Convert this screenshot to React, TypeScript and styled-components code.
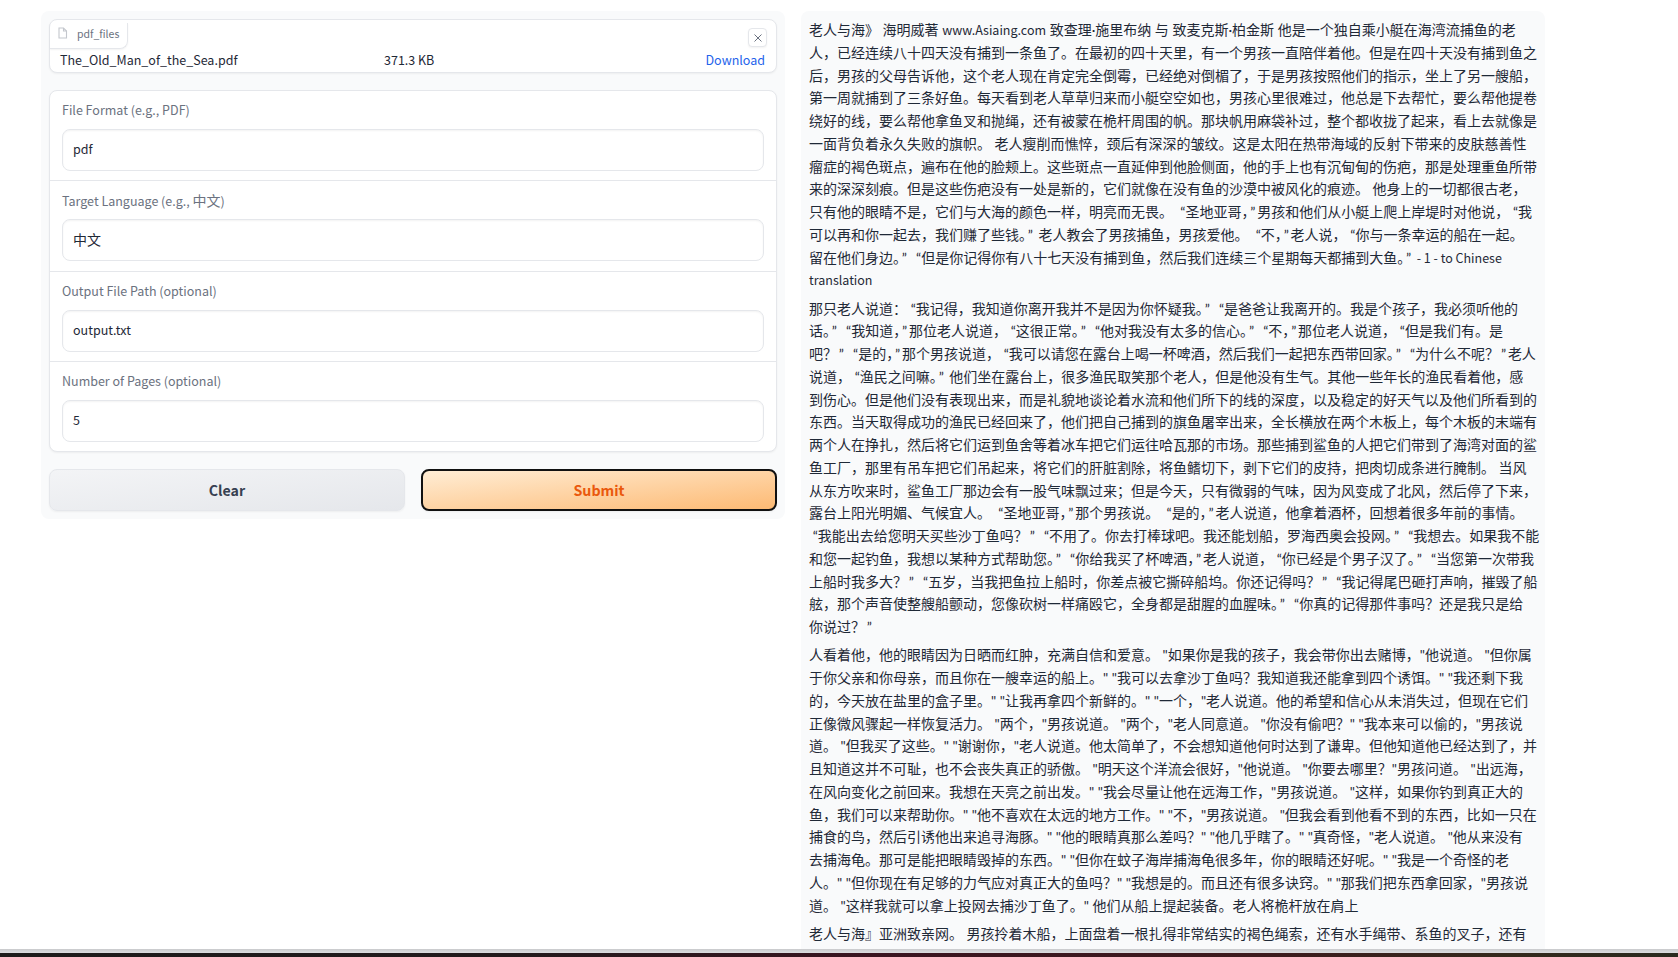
import * as React from 'react';
import styled, { createGlobalStyle } from 'styled-components';

// Noto CJK's latin is Source Sans drawn about 1.12x larger, so latin runs get a smaller size
const fontStack = `'Noto Sans CJK SC', 'Noto Sans', sans-serif`;

const GlobalStyle = createGlobalStyle`
  html, body {
    margin: 0;
    padding: 0;
    background: #fff;
    font-family: ${fontStack};
  }
  * {
    box-sizing: border-box;
  }
`;

const Page = styled.div`
  width: 1678px;
  height: 957px;
  display: flex;
  flex-direction: column;
  overflow: hidden;
`;

const Columns = styled.div`
  flex: 1;
  min-height: 0;
  display: flex;
  gap: 16px;
  padding: 11px 133px 0 41px;
`;

const LeftPanel = styled.div`
  width: 744px;
  height: 508px;
  padding: 8px;
  background: #f9fafb;
  border-radius: 8px;
  display: flex;
  flex-direction: column;
`;

const FileBox = styled.div`
  position: relative;
  height: 54px;
  background: #fff;
  border: 1px solid #e5e7eb;
  border-radius: 8px;
  box-shadow: 0 1px 2px rgba(0, 0, 0, 0.05);
`;

const FileTag = styled.div`
  display: inline-flex;
  align-items: center;
  gap: 9px;
  height: 26px;
  padding: 0 8px 4px 7px;
  font-size: 10.5px;
  color: #6b7280;
  border-right: 1px solid #e5e7eb;
  border-bottom: 1px solid #e5e7eb;
  border-bottom-right-radius: 8px;
  box-shadow: 0 1px 2px rgba(0, 0, 0, 0.05);
`;

const CloseButton = styled.div`
  position: absolute;
  top: 8px;
  right: 9px;
  width: 19px;
  height: 19px;
  display: flex;
  align-items: center;
  justify-content: center;
  background: #fff;
  border: 1px solid #e5e7eb;
  border-radius: 4px;
  box-shadow: 0 1px 2px rgba(0, 0, 0, 0.05);
`;

const FileRow = styled.div`
  display: grid;
  grid-template-columns: 324px 1fr auto;
  align-items: center;
  height: 21px;
  padding: 0 11px 0 10px;
  font-size: 12.5px;
  color: #1f2937;
`;

const DownloadLink = styled.a`
  color: #2563eb;
  text-decoration: none;
`;

const FormBox = styled.div`
  margin-top: 17px;
  height: 362px;
  background: #fff;
  border: 1px solid #e5e7eb;
  border-radius: 8px;
  box-shadow: 0 1px 2px rgba(0, 0, 0, 0.05);
  display: flex;
  flex-direction: column;
`;

const Field = styled.div`
  flex: 1;
  padding: 9px 12px 0;
  & + & {
    border-top: 1px solid #e5e7eb;
  }
`;

const FieldLabel = styled.div`
  height: 20px;
  line-height: 20px;
  font-size: 12.5px;
  color: #6b7280;
  margin-bottom: 9px;
`;

const FieldInput = styled.div`
  height: 42px;
  line-height: 38px;
  padding: 0 10px;
  font-size: 12.5px;
  color: #1f2937;
  background: #fff;
  border: 1px solid #e5e7eb;
  border-radius: 8px;
  box-shadow: inset 0 1px 2px rgba(0, 0, 0, 0.05);
`;

const Cjk = styled.span`
  font-size: 14px;
`;

const ButtonRow = styled.div`
  display: grid;
  grid-template-columns: 1fr 1fr;
  gap: 16px;
  margin-top: 17px;
`;

const ActionButton = styled.button<{ $primary?: boolean }>`
  height: 42px;
  padding: 0;
  font-family: ${fontStack};
  font-size: 14.2px;
  font-weight: 600;
  border-radius: 8px;
  color: ${(p) => (p.$primary ? '#ea580c' : '#374151')};
  background: ${(p) =>
    p.$primary
      ? 'linear-gradient(to bottom right, #ffedd5, #fdba74)'
      : 'linear-gradient(to bottom right, #f3f4f6, #e5e7eb)'};
  border: ${(p) => (p.$primary ? '2px solid #111' : '1px solid #e5e7eb')};
  box-shadow: 0 1px 2px rgba(0, 0, 0, 0.05);
`;

const OutputPanel = styled.div`
  width: 744px;
  height: 100%;
  padding: 8px 8px 0;
  background: #f9fafb;
  border-top-left-radius: 8px;
  border-top-right-radius: 8px;
  overflow: hidden;
`;

// Lato goes first for its narrow quotes, spaces and middle dot; the CJK comes from the fallback
const Paragraph = styled.p`
  margin: 0 0 5.5px;
  font-family: 'Lato', ${fontStack};
  font-size: 14px;
  line-height: 22.75px;
  color: #1f2937;
`;

const TextLine = styled.span`
  display: block;
  white-space: nowrap;
`;

const LatinRun = styled.span`
  font-family: ${fontStack};
  font-size: 12.5px;
`;

// curly quotes sit wider in the reference than Lato draws them
const Quote = styled.span<{ $open: boolean }>`
  padding: ${(p) => (p.$open ? '0 0 0 3.7px' : '0 1.85px')};
`;

const ShadowBar = styled.div`
  height: 4px;
  flex-shrink: 0;
  background: linear-gradient(to bottom, #c9cacc, #dcdde0);
`;

const TaskBar = styled.div`
  height: 4px;
  flex-shrink: 0;
  background: linear-gradient(to right, #1d1b1b 0%, #221a1c 30%, #3a1420 52%, #3d1a1d 75%, #33291c 90%, #2a2a1f 100%);
`;

const fields = [
  { label: <>File Format (e.g., PDF)</>, value: <>pdf</> },
  { label: <>Target Language (e.g., <Cjk>中文</Cjk>)</>, value: <Cjk>中文</Cjk> },
  { label: <>Output File Path (optional)</>, value: <>output.txt</> },
  { label: <>Number of Pages (optional)</>, value: <>5</> },
];

const paragraphs = [
  [
    '老人与海》 海明威著 www.Asiaing.com 致查理·施里布纳 与 致麦克斯·柏金斯 他是一个独自乘小艇在海湾流捕鱼的老',
    '人，已经连续八十四天没有捕到一条鱼了。在最初的四十天里，有一个男孩一直陪伴着他。但是在四十天没有捕到鱼之',
    '后，男孩的父母告诉他，这个老人现在肯定完全倒霉，已经绝对倒楣了，于是男孩按照他们的指示，坐上了另一艘船，',
    '第一周就捕到了三条好鱼。每天看到老人草草归来而小艇空空如也，男孩心里很难过，他总是下去帮忙，要么帮他提卷',
    '绕好的线，要么帮他拿鱼叉和抛绳，还有被蒙在桅杆周围的帆。那块帆用麻袋补过，整个都收拢了起来，看上去就像是',
    '一面背负着永久失败的旗帜。 老人瘦削而憔悴，颈后有深深的皱纹。这是太阳在热带海域的反射下带来的皮肤慈善性',
    '瘤症的褐色斑点，遍布在他的脸颊上。这些斑点一直延伸到他脸侧面，他的手上也有沉甸甸的伤疤，那是处理重鱼所带',
    '来的深深刻痕。但是这些伤疤没有一处是新的，它们就像在没有鱼的沙漠中被风化的痕迹。 他身上的一切都很古老，',
    '只有他的眼睛不是，它们与大海的颜色一样，明亮而无畏。 “圣地亚哥，”男孩和他们从小艇上爬上岸堤时对他说，“我',
    '可以再和你一起去，我们赚了些钱。” 老人教会了男孩捕鱼，男孩爱他。 “不，”老人说，“你与一条幸运的船在一起。',
    '留在他们身边。” “但是你记得你有八十七天没有捕到鱼，然后我们连续三个星期每天都捕到大鱼。” - 1 - to Chinese',
    'translation',
  ],
  [
    '那只老人说道：“我记得，我知道你离开我并不是因为你怀疑我。” “是爸爸让我离开的。我是个孩子，我必须听他的',
    '话。” “我知道，”那位老人说道，“这很正常。” “他对我没有太多的信心。” “不，”那位老人说道，“但是我们有。是',
    '吧？” “是的，”那个男孩说道，“我可以请您在露台上喝一杯啤酒，然后我们一起把东西带回家。” “为什么不呢？”老人',
    '说道，“渔民之间嘛。” 他们坐在露台上，很多渔民取笑那个老人，但是他没有生气。其他一些年长的渔民看着他，感',
    '到伤心。但是他们没有表现出来，而是礼貌地谈论着水流和他们所下的线的深度，以及稳定的好天气以及他们所看到的',
    '东西。当天取得成功的渔民已经回来了，他们把自己捕到的旗鱼屠宰出来，全长横放在两个木板上，每个木板的末端有',
    '两个人在挣扎，然后将它们运到鱼舍等着冰车把它们运往哈瓦那的市场。那些捕到鲨鱼的人把它们带到了海湾对面的鲨',
    '鱼工厂，那里有吊车把它们吊起来，将它们的肝脏割除，将鱼鳍切下，剥下它们的皮持，把肉切成条进行腌制。 当风',
    '从东方吹来时，鲨鱼工厂那边会有一股气味飘过来；但是今天，只有微弱的气味，因为风变成了北风，然后停了下来，',
    '露台上阳光明媚、气候宜人。 “圣地亚哥，”那个男孩说。 “是的，”老人说道，他拿着酒杯，回想着很多年前的事情。',
    '“我能出去给您明天买些沙丁鱼吗？” “不用了。你去打棒球吧。我还能划船，罗海西奥会投网。” “我想去。如果我不能',
    '和您一起钓鱼，我想以某种方式帮助您。” “你给我买了杯啤酒，”老人说道，“你已经是个男子汉了。” “当您第一次带我',
    '上船时我多大？” “五岁，当我把鱼拉上船时，你差点被它撕碎船坞。你还记得吗？” “我记得尾巴砸打声响，摧毁了船',
    '舷，那个声音使整艘船颤动，您像砍树一样痛殴它，全身都是甜腥的血腥味。” “你真的记得那件事吗？还是我只是给',
    '你说过？”',
  ],
  [
    '人看着他，他的眼睛因为日晒而红肿，充满自信和爱意。 "如果你是我的孩子，我会带你出去赌博，"他说道。 "但你属',
    '于你父亲和你母亲，而且你在一艘幸运的船上。" "我可以去拿沙丁鱼吗？我知道我还能拿到四个诱饵。" "我还剩下我',
    '的，今天放在盐里的盒子里。" "让我再拿四个新鲜的。" "一个，"老人说道。他的希望和信心从未消失过，但现在它们',
    '正像微风骤起一样恢复活力。 "两个，"男孩说道。 "两个，"老人同意道。 "你没有偷吧？" "我本来可以偷的，"男孩说',
    '道。 "但我买了这些。" "谢谢你，"老人说道。他太简单了，不会想知道他何时达到了谦卑。但他知道他已经达到了，并',
    '且知道这并不可耻，也不会丧失真正的骄傲。 "明天这个洋流会很好，"他说道。 "你要去哪里？"男孩问道。 "出远海，',
    '在风向变化之前回来。我想在天亮之前出发。" "我会尽量让他在远海工作，"男孩说道。 "这样，如果你钓到真正大的',
    '鱼，我们可以来帮助你。" "他不喜欢在太远的地方工作。" "不，"男孩说道。 "但我会看到他看不到的东西，比如一只在',
    '捕食的鸟，然后引诱他出来追寻海豚。" "他的眼睛真那么差吗？" "他几乎瞎了。" "真奇怪，"老人说道。 "他从来没有',
    '去捕海龟。那可是能把眼睛毁掉的东西。" "但你在蚊子海岸捕海龟很多年，你的眼睛还好呢。" "我是一个奇怪的老',
    '人。" "但你现在有足够的力气应对真正大的鱼吗？" "我想是的。而且还有很多诀窍。" "那我们把东西拿回家，"男孩说',
    '道。 "这样我就可以拿上投网去捕沙丁鱼了。" 他们从船上提起装备。老人将桅杆放在肩上',
  ],
  ['老人与海』亚洲致亲网。 男孩拎着木船，上面盘着一根扎得非常结实的褐色绳索，还有水手绳带、系鱼的叉子，还有'],
];

const runs = /(www\.Asiaing\.com|- 1 - to Chinese|^translation$|[“”])/;

const renderRun = (part: string, key: number) => {
  if (part === '“' || part === '”') {
    return (
      <Quote key={key} $open={part === '“'}>
        {part}
      </Quote>
    );
  }
  return runs.test(part) ? <LatinRun key={key}>{part}</LatinRun> : part;
};

const FileIcon = () => (
  <svg width="11" height="12" viewBox="0 0 11 12" fill="none" stroke="#c4c7cd" strokeWidth="1.1">
    <path d="M2 1h4.5L9.5 4v7H2z" />
    <path d="M6.5 1v3h3" />
  </svg>
);

const CloseIcon = () => (
  <svg width="10" height="10" viewBox="0 0 10 10" fill="none" stroke="#6b7280" strokeWidth="1">
    <path d="M1.5 1.5l7 7M8.5 1.5l-7 7" />
  </svg>
);

export default function App() {
  return (
    <>
      <GlobalStyle />
      <Page>
        <Columns>
          <LeftPanel>
            <FileBox>
              <FileTag>
                <FileIcon />
                pdf_files
              </FileTag>
              <CloseButton>
                <CloseIcon />
              </CloseButton>
              <FileRow>
                <span>The_Old_Man_of_the_Sea.pdf</span>
                <span>371.3 KB</span>
                <DownloadLink>Download</DownloadLink>
              </FileRow>
            </FileBox>
            <FormBox>
              {fields.map((f, i) => (
                <Field key={i}>
                  <FieldLabel>{f.label}</FieldLabel>
                  <FieldInput>{f.value}</FieldInput>
                </Field>
              ))}
            </FormBox>
            <ButtonRow>
              <ActionButton>Clear</ActionButton>
              <ActionButton $primary>Submit</ActionButton>
            </ButtonRow>
          </LeftPanel>
          <OutputPanel>
            {paragraphs.map((lines, i) => (
              <Paragraph key={i}>
                {lines.map((line, j) => (
                  <TextLine key={j}>{line.split(runs).map(renderRun)}</TextLine>
                ))}
              </Paragraph>
            ))}
          </OutputPanel>
        </Columns>
        <ShadowBar />
        <TaskBar />
      </Page>
    </>
  );
}
